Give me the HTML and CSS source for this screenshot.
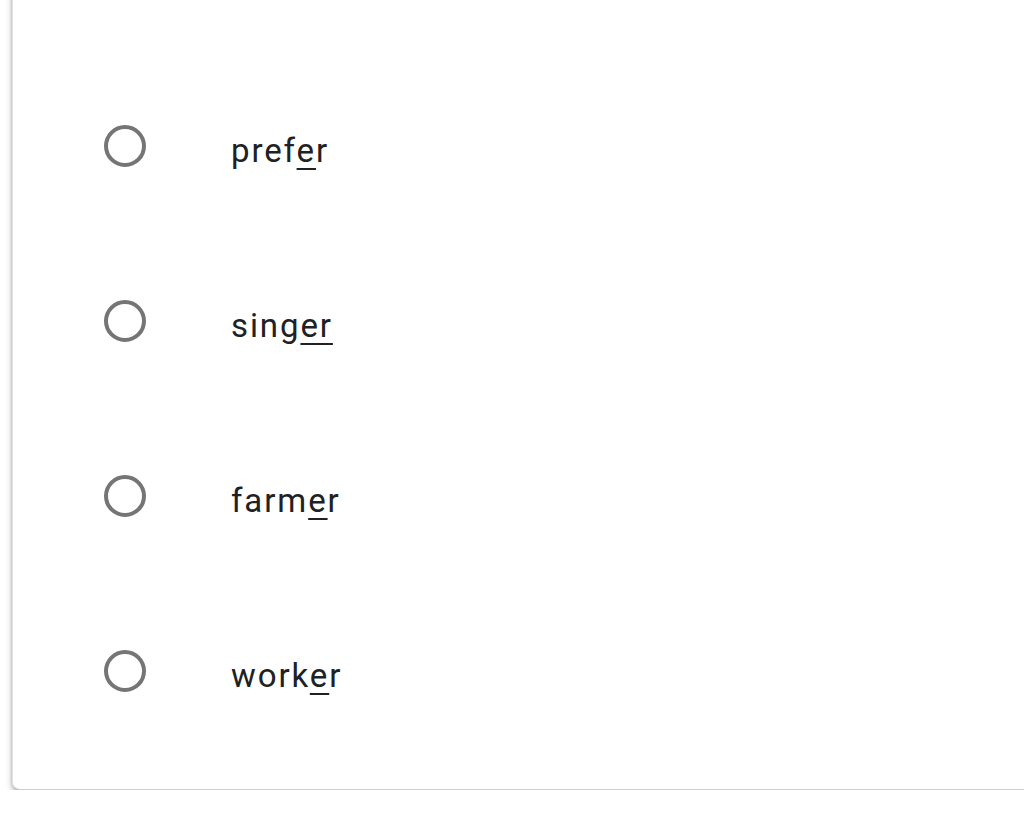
FILE: index.html
```html
<!DOCTYPE html>
<html>
<head>
  <title>Quiz</title>
  <link rel="stylesheet" href="styles.css">
</head>
<body>
  <div class="card">
    <div class="choices">
      <label class="choice">
        <span class="radio"></span>
        <span class="word">pref<u>e</u>r</span>
      </label>
      <label class="choice">
        <span class="radio"></span>
        <span class="word">sing<u>er</u></span>
      </label>
      <label class="choice">
        <span class="radio"></span>
        <span class="word">farm<u>e</u>r</span>
      </label>
      <label class="choice">
        <span class="radio"></span>
        <span class="word">work<u>e</u>r</span>
      </label>
    </div>
  </div>
</body>
</html>
```

FILE: styles.css
```css
body {
  margin: 0;
  background-color: #ffffff;
  font-family: Roboto, "Noto Sans", Arial, sans-serif;
  overflow: hidden;
}

.card {
  margin: -20px -20px 0 12px;
  padding: 78px 0 31px 91px;
  background-color: #ffffff;
  border-left: 1px solid #e4e4e4;
  border-bottom: 1px solid #cfcfcf;
  border-radius: 0 0 8px 8px;
  box-shadow: 0 4px 6px rgba(0, 0, 0, 0.28), -1px 0 2px rgba(0, 0, 0, 0.1);
}

.choices {
  display: flex;
  flex-direction: column;
}

.choice {
  display: flex;
  align-items: center;
  height: 175px;
}

.radio {
  width: 34px;
  height: 34px;
  border: 4px solid #757575;
  border-radius: 50%;
  flex-shrink: 0;
}

.word {
  margin-left: 85px;
  margin-top: 10px;
  font-size: 33px;
  letter-spacing: 1.9px;
  color: #202124;
}

.word u {
  text-decoration-thickness: 2px;
  text-underline-offset: 6px;
}
```
